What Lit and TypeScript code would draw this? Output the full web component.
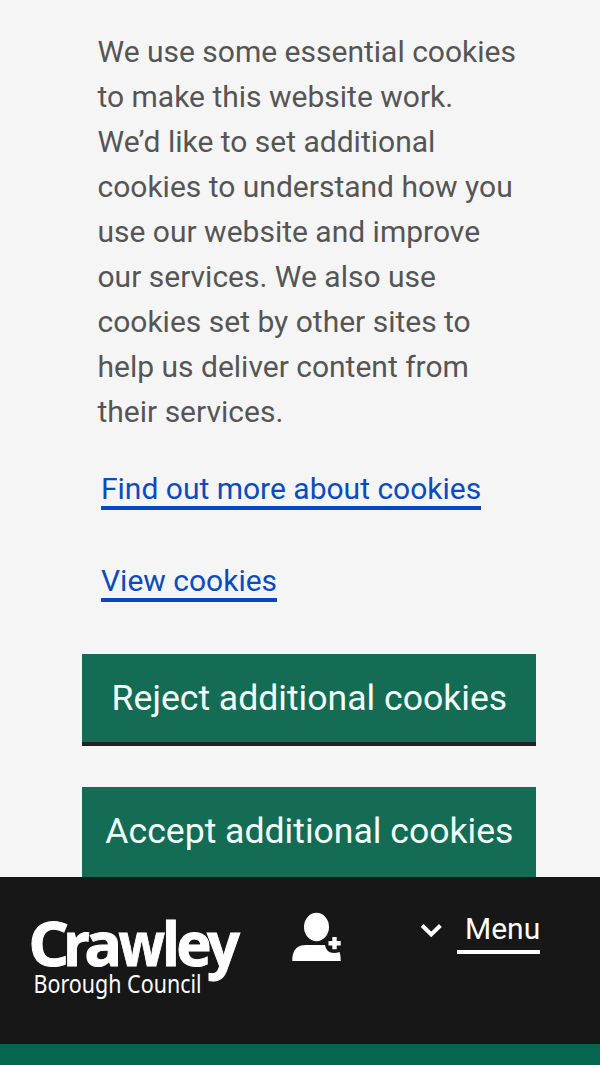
import { LitElement, html, svg, css } from "lit";
import { customElement } from "lit/decorators.js";

// Wordmark letters with their start position and advance width.
const WORDMARK: Array<[string, number, number]> = [
  ["C", 28.3, 41],
  ["r", 63, 27],
  ["a", 84.2, 38],
  ["w", 118.5, 46.5],
  ["l", 161.8, 18.3],
  ["e", 176.3, 35.4],
  ["y", 207, 33],
];

@customElement("app-root")
export class AppRoot extends LitElement {
  static styles = css`
    :host {
      display: flex;
      flex-direction: column;
      height: 1065px;
      overflow: hidden;
      background: #f5f5f5;
      font-family: Roboto, "Liberation Sans", sans-serif;
      font-size: 30px;
      line-height: 45px;
      color: #555;
    }
    .banner {
      box-sizing: border-box;
      height: 877px;
      flex: none;
      overflow: hidden;
      padding: 29px 63.6px 0 82.4px;
    }
    .copy {
      margin: 0 0 0 15.1px;
      white-space: nowrap;
    }
    .links {
      display: flex;
      flex-direction: column;
      align-items: flex-start;
      gap: 53px;
      margin: 37px 0 0 18.6px;
    }
    .link {
      box-sizing: border-box;
      height: 39px;
      line-height: 36px;
      color: #0a4bbf;
      text-decoration: none;
      border-bottom: 4px solid #0648c4;
      white-space: nowrap;
    }
    .button {
      display: block;
      box-sizing: border-box;
      width: 454px;
      height: 92px;
      padding: 0;
      border: 0;
      border-bottom: 4px solid #222;
      background: #146c55;
      color: #f3fffb;
      font: 35.6px/88px Roboto, "Liberation Sans", sans-serif;
      text-align: center;
      white-space: nowrap;
    }
    .reject { margin-top: 52px; }
    .accept { margin-top: 41px; height: 96px; padding-bottom: 4px; }
    .header {
      display: flex;
      align-items: flex-start;
      box-sizing: border-box;
      flex: none;
      height: 167px;
      padding-left: 24px;
      background: #171717;
      color: #fff;
    }
    .logo {
      display: block;
      flex: none;
      overflow: visible;
      margin-top: 23px;
    }
    .logo text { fill: #fff; }
    .name {
      font: 700 60px "Open Sans", "Noto Sans", sans-serif;
      stroke: #fff;
      stroke-width: 0.9px;
    }
    .sub { font: 400 25px "Noto Sans", "Open Sans", sans-serif; }
    .user {
      display: block;
      flex: none;
      margin: 33px 0 0 36px;
    }
    .chevron {
      display: block;
      flex: none;
      margin: 43px 0 0 76px;
    }
    .menu {
      box-sizing: border-box;
      width: 83px;
      height: 47px;
      margin: 30px 0 0 13px;
      padding-left: 8px;
      border-bottom: 4px solid #fff;
      line-height: 44px;
    }
    .strip {
      flex: 1;
      background: #056650;
    }
  `;

  render() {
    return html`
      <section class="banner">
        <p class="copy">
          We use some essential cookies<br />to make this website work.<br />We’d
          like to set additional<br />cookies to understand how you<br />use our
          website and improve<br />our services. We also use<br />cookies set by
          other sites to<br />help us deliver content from<br />their services.
        </p>
        <div class="links">
          <a class="link">Find out more about cookies</a>
          <a class="link">View cookies</a>
        </div>
        <button class="button reject">Reject additional cookies</button>
        <button class="button accept">Accept additional cookies</button>
      </section>
      <header class="header">
        <svg class="logo" width="232" height="110" viewBox="24 900 232 110">
          <text class="name" y="965.5">${WORDMARK.map(
            ([letter, x, width]) =>
              svg`<tspan x=${x} textLength=${width} lengthAdjust="spacingAndGlyphs">${letter}</tspan>`
          )}</text>
          <text class="sub" x="33.5" y="993" textLength="168" lengthAdjust="spacingAndGlyphs">Borough Council</text>
        </svg>
        <svg class="user" width="52" height="54" viewBox="292 910 52 54" fill="#fff">
          <ellipse cx="316.5" cy="927" rx="12.5" ry="14.2" />
          <path d="M292.3 961V958Q293.5 945 306 945H325Q326 952.7 334 953Q337 953 339.6 952Q340.8 956 340.8 961Z" />
          <path d="M332.3 937H336.7V941H340.7V945.4H336.7V949.3H332.3V945.4H328.5V941H332.3Z" />
        </svg>
        <svg class="chevron" width="24" height="22" viewBox="420 920 24 22" fill="none" stroke="#fff" stroke-width="4">
          <path d="M422.2 925.5L431.2 934.5L440.4 925.5" />
        </svg>
        <div class="menu">Menu</div>
      </header>
      <div class="strip"></div>
    `;
  }
}
